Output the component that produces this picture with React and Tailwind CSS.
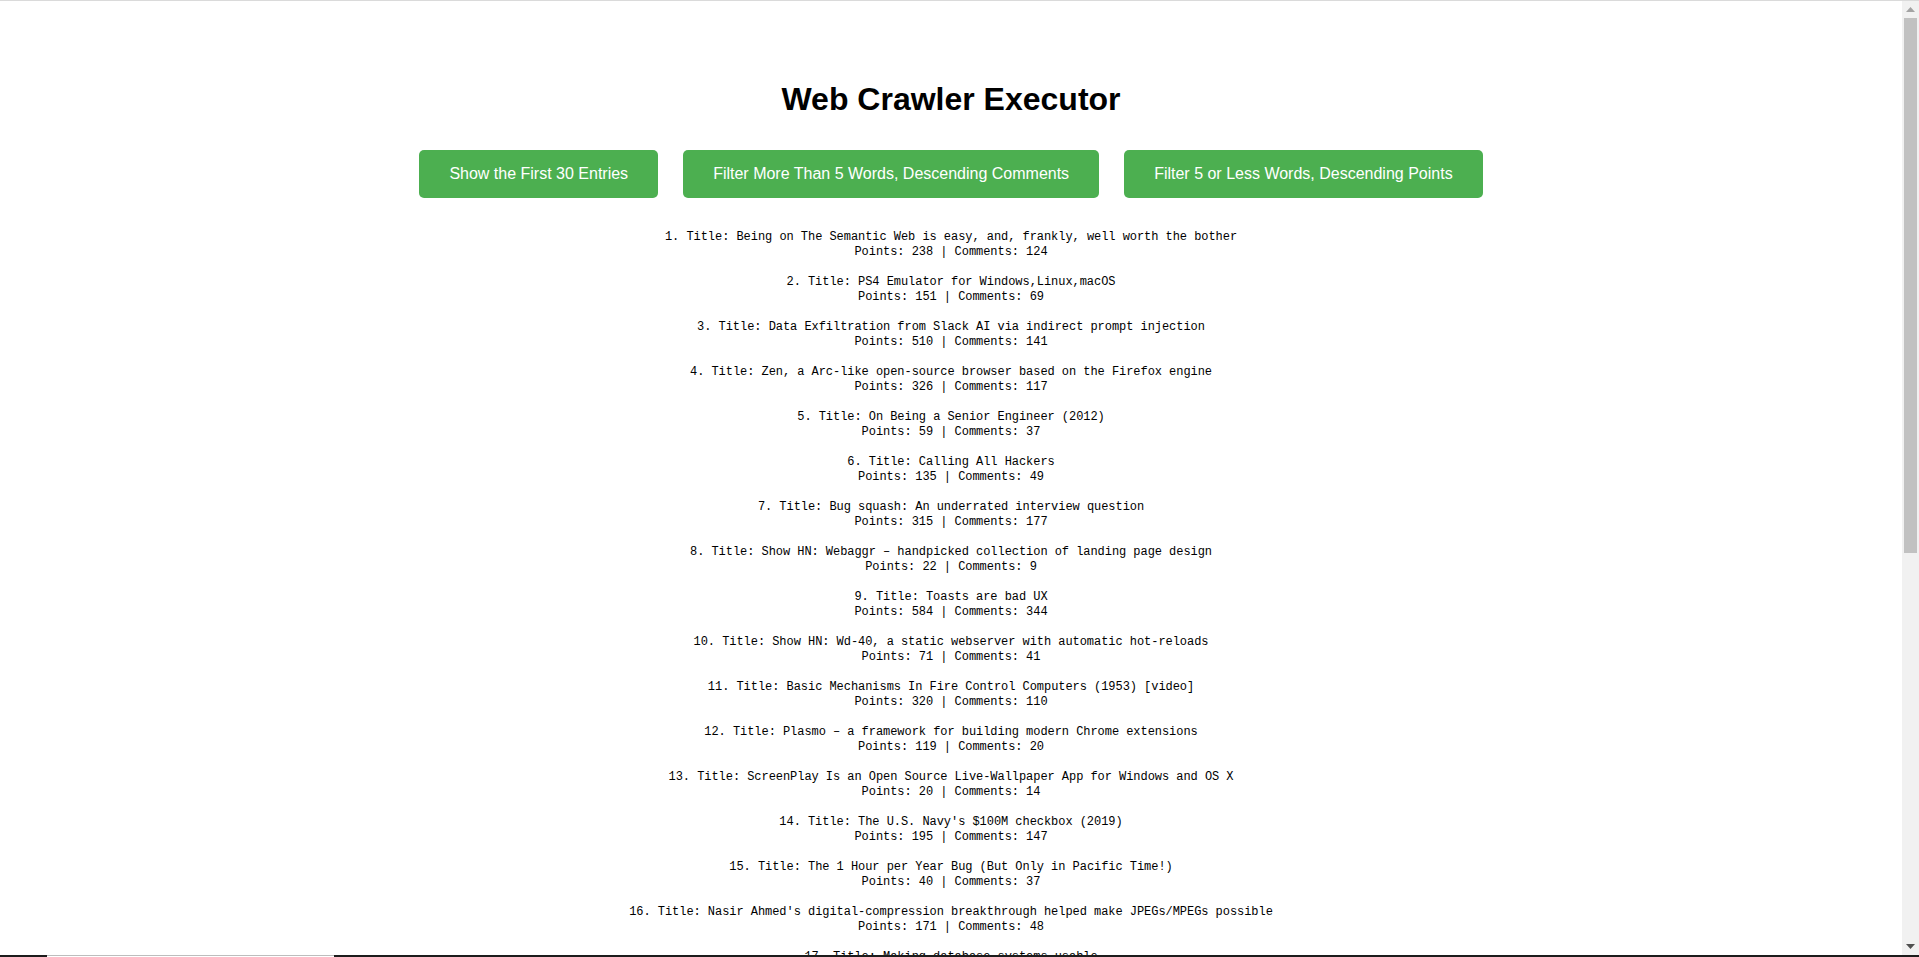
import React from "react";

const entries = [
  { title: "Being on The Semantic Web is easy, and, frankly, well worth the bother", points: 238, comments: 124 },
  { title: "PS4 Emulator for Windows,Linux,macOS", points: 151, comments: 69 },
  { title: "Data Exfiltration from Slack AI via indirect prompt injection", points: 510, comments: 141 },
  { title: "Zen, a Arc-like open-source browser based on the Firefox engine", points: 326, comments: 117 },
  { title: "On Being a Senior Engineer (2012)", points: 59, comments: 37 },
  { title: "Calling All Hackers", points: 135, comments: 49 },
  { title: "Bug squash: An underrated interview question", points: 315, comments: 177 },
  { title: "Show HN: Webaggr – handpicked collection of landing page design", points: 22, comments: 9 },
  { title: "Toasts are bad UX", points: 584, comments: 344 },
  { title: "Show HN: Wd-40, a static webserver with automatic hot-reloads", points: 71, comments: 41 },
  { title: "Basic Mechanisms In Fire Control Computers (1953) [video]", points: 320, comments: 110 },
  { title: "Plasmo – a framework for building modern Chrome extensions", points: 119, comments: 20 },
  { title: "ScreenPlay Is an Open Source Live-Wallpaper App for Windows and OS X", points: 20, comments: 14 },
  { title: "The U.S. Navy's $100M checkbox (2019)", points: 195, comments: 147 },
  { title: "The 1 Hour per Year Bug (But Only in Pacific Time!)", points: 40, comments: 37 },
  { title: "Nasir Ahmed's digital-compression breakthrough helped make JPEGs/MPEGs possible", points: 171, comments: 48 },
  { title: "Making database systems usable", points: 96, comments: 33 },
  { title: "Launch HN: Outerport (YC S24) – Instant hot-swapping for AI model weights", points: 88, comments: 21 },
];

const actions = [
  "Show the First 30 Entries",
  "Filter More Than 5 Words, Descending Comments",
  "Filter 5 or Less Words, Descending Points",
];

function Scrollbar() {
  return (
    <div className="flex w-[17px] flex-col bg-[#f1f1f1]">
      <div className="flex h-[17px] items-center justify-center">
        <svg width="9" height="5" viewBox="0 0 9 5">
          <path d="M4.5 0 L9 5 L0 5 Z" fill="#a3a3a3" />
        </svg>
      </div>
      <div className="flex flex-1 flex-col px-[2px]">
        <div className="h-[535px] bg-[#c1c1c1]" />
      </div>
      <div className="flex h-[17px] items-center justify-center">
        <svg width="9" height="5" viewBox="0 0 9 5">
          <path d="M0 0 L9 0 L4.5 5 Z" fill="#505050" />
        </svg>
      </div>
    </div>
  );
}

export default function App() {
  return (
    <div className="flex h-[957px] flex-col overflow-hidden bg-white font-['Liberation_Sans',Arial,sans-serif]">
      <div className="h-px bg-[#dadada]" />
      <div className="flex min-h-0 flex-1">
        <main className="min-w-0 flex-1 overflow-hidden pt-[80px] text-center">
          <h1 className="text-[32px] font-bold leading-[37px] text-black">Web Crawler Executor</h1>

          <div className="mt-[32px] flex justify-center gap-[25px]">
            {actions.map((label) => (
              <button
                key={label}
                className="rounded-[5px] bg-[#4caf50] px-[30px] py-[15px] text-[16px] leading-[18px] text-white"
              >
                {label}
              </button>
            ))}
          </div>

          <ol className="mt-[32px] flex flex-col gap-[15px] font-['Liberation_Mono',monospace] text-[12px] leading-[15px] tracking-[-0.05px] text-black">
            {entries.map((e, i) => (
              <li key={i}>
                <div>
                  {i + 1}. Title: {e.title}
                </div>
                <div>
                  Points: {e.points} | Comments: {e.comments}
                </div>
              </li>
            ))}
          </ol>
        </main>
        <Scrollbar />
      </div>
      <div className="flex h-[2px]">
        <div className="w-[47px] bg-[#1c1c1c]" />
        <div className="w-[287px] border-t border-[#bdbdbd] bg-white" />
        <div className="flex-1 bg-[#1c1c1c]" />
      </div>
    </div>
  );
}
